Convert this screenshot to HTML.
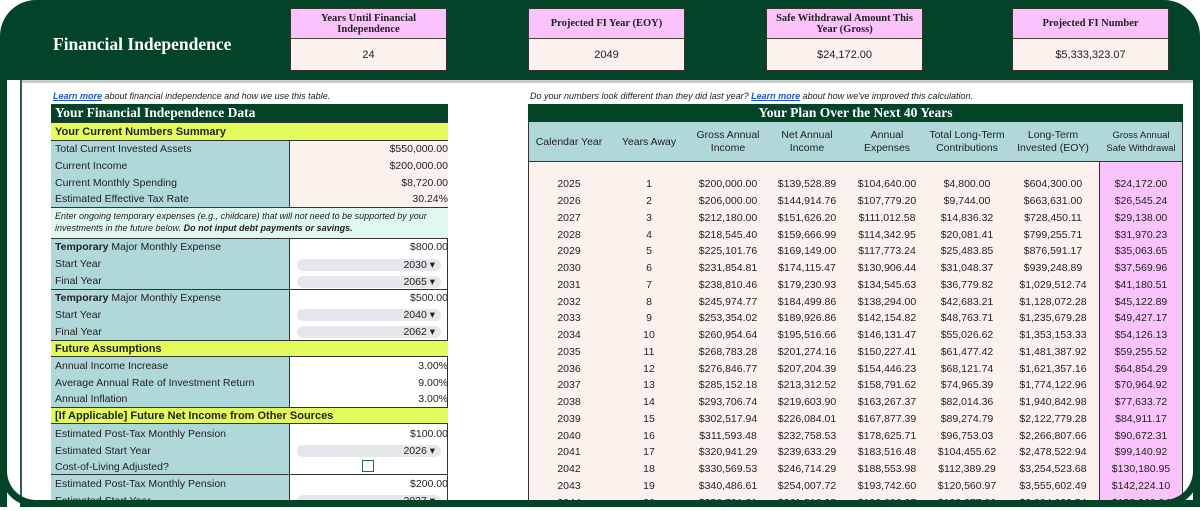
<!DOCTYPE html>
<html><head><meta charset="utf-8"><style>
*{margin:0;padding:0;box-sizing:border-box}
body{width:1200px;height:507px;overflow:hidden;background:#fff;font-family:"Liberation Sans",Arial,sans-serif;color:#222;position:relative}
.a{position:absolute}
.g{background:#034328}
.serif{font-family:"Liberation Serif",serif;font-weight:bold}
.box{position:absolute;top:8px;width:157px;height:63px;border:1px solid #333;background:#fdf1ee}
.box .h{height:30px;background:#fbc3fb;border-bottom:1px solid #444;font-family:"Liberation Serif",serif;font-weight:bold;font-size:10.5px;display:flex;align-items:center;justify-content:center;text-align:center;line-height:11px;color:#222}
.box .v{height:32px;display:flex;align-items:center;justify-content:center;font-size:11px}
.lab{position:absolute;left:51px;width:239px;background:#b1d8d8;border-right:1px solid #333}
.val{position:absolute;left:290px;width:158px}
.r{position:absolute;font-size:10.5px;line-height:17px;height:17px}
.rv{position:absolute;font-size:10.5px;line-height:17px;height:17px;right:752px;text-align:right}
.dd{position:absolute;left:297px;width:144px;height:12px;background:#e6e7ea;border-radius:6px;font-size:10.5px;line-height:12px;text-align:right;padding-right:6px}
.yel{position:absolute;left:51px;width:397px;height:17px;background:#e4fb5c;font-weight:bold;font-size:11px;line-height:17px;padding-left:4px;border-top:1px solid #333;border-bottom:1px solid #333}
.frame{border-left:1px solid #333;border-right:1px solid #333}
table{border-collapse:collapse;table-layout:fixed}
td{text-align:center;font-size:10.5px;height:16.75px;padding:0;white-space:nowrap}
</style></head><body>
<div class="a g" style="left:0;top:0;width:1200px;height:80px;border-radius:36px 36px 0 0"></div>
<div class="a" style="left:20px;top:80px;width:1173px;height:420px;background:#fff;border-top:3px solid #c8ccca"></div>
<div class="a g" style="left:0;top:40px;width:7px;height:467px"></div>
<div class="a g" style="left:1193px;top:40px;width:7px;height:467px"></div>
<div class="a" style="left:20px;top:80px;width:2px;height:420px;background:#2f5e45"></div>
<div class="a serif" style="left:53px;top:34px;color:#fff;font-size:17.5px">Financial Independence</div>
<div class="box" style="left:290px"><div class="h">Years Until Financial<br>Independence</div><div class="v">24</div></div>
<div class="box" style="left:528px"><div class="h">Projected FI Year (EOY)</div><div class="v">2049</div></div>
<div class="box" style="left:766px"><div class="h">Safe Withdrawal Amount This<br>Year (Gross)</div><div class="v">$24,172.00</div></div>
<div class="box" style="left:1012px"><div class="h">Projected FI Number</div><div class="v">$5,333,323.07</div></div>

<div class="a" style="left:53px;top:91px;font-size:9px;font-style:italic"><span style="color:#1a55d8;text-decoration:underline;font-weight:bold">Learn more</span> about financial independence and how we use this table.</div>
<div class="a g serif" style="left:51px;top:104px;width:397px;height:18px;color:#fff;font-size:13.5px;line-height:18px;padding-left:4px">Your Financial Independence Data</div>
<div class="yel" style="top:122px;height:19px;line-height:18px">Your Current Numbers Summary</div>
<div class="a frame" style="left:51px;top:140px;width:397px;height:367px"></div>
<div class="lab" style="top:141px;height:67px"></div><div class="val" style="top:141px;height:67px;background:#fdf1ee"></div>
<div class="r" style="left:55px;top:141px">Total Current Invested Assets</div><div class="rv" style="top:141px">$550,000.00</div>
<div class="r" style="left:55px;top:158px">Current Income</div><div class="rv" style="top:158px">$200,000.00</div>
<div class="r" style="left:55px;top:175px">Current Monthly Spending</div><div class="rv" style="top:175px">$8,720.00</div>
<div class="r" style="left:55px;top:191px">Estimated Effective Tax Rate</div><div class="rv" style="top:191px">30.24%</div>
<div class="a" style="left:51px;top:207px;width:397px;height:32px;background:#e0f6f1;border-top:1px solid #333;border-bottom:1px solid #333;font-size:9px;font-style:italic;line-height:11.5px;padding:3px 4px">Enter ongoing temporary expenses (e.g., childcare) that will not need to be supported by your investments in the future below. <b>Do not input debt payments or savings.</b></div>
<div class="lab" style="top:239px;height:101px"></div>
<div class="a" style="left:51px;top:289px;width:397px;height:1px;background:#333"></div>
<div class="r" style="left:55px;top:239px"><b>Temporary</b> Major Monthly Expense</div><div class="rv" style="top:239px">$800.00</div>
<div class="r" style="left:55px;top:256px">Start Year</div><div class="dd" style="top:259px">2030 &#9662;</div>
<div class="r" style="left:55px;top:273px">Final Year</div><div class="dd" style="top:276px">2065 &#9662;</div>
<div class="r" style="left:55px;top:290px"><b>Temporary</b> Major Monthly Expense</div><div class="rv" style="top:290px">$500.00</div>
<div class="r" style="left:55px;top:307px">Start Year</div><div class="dd" style="top:309px">2040 &#9662;</div>
<div class="r" style="left:55px;top:324px">Final Year</div><div class="dd" style="top:326px">2062 &#9662;</div>
<div class="yel" style="top:340px">Future Assumptions</div>
<div class="lab" style="top:357px;height:50px"></div>
<div class="r" style="left:55px;top:358px">Annual Income Increase</div><div class="rv" style="top:358px">3.00%</div>
<div class="r" style="left:55px;top:375px">Average Annual Rate of Investment Return</div><div class="rv" style="top:375px">9.00%</div>
<div class="r" style="left:55px;top:391px">Annual Inflation</div><div class="rv" style="top:391px">3.00%</div>
<div class="yel" style="top:407px">[If Applicable] Future Net Income from Other Sources</div>
<div class="lab" style="top:424px;height:83px"></div>
<div class="a" style="left:51px;top:474px;width:397px;height:1px;background:#333"></div>
<div class="r" style="left:55px;top:426px">Estimated Post-Tax Monthly Pension</div><div class="rv" style="top:426px">$100.00</div>
<div class="r" style="left:55px;top:443px">Estimated Start Year</div><div class="dd" style="top:445px">2026 &#9662;</div>
<div class="r" style="left:55px;top:459px">Cost-of-Living Adjusted?</div>
<div class="a" style="left:362px;top:460px;width:12px;height:12px;border:1.5px solid #2d6a4f"></div>
<div class="r" style="left:55px;top:476px">Estimated Post-Tax Monthly Pension</div><div class="rv" style="top:476px">$200.00</div>
<div class="r" style="left:55px;top:493px">Estimated Start Year</div><div class="dd" style="top:495px">2027 &#9662;</div>

<div class="a" style="left:530px;top:91px;font-size:9px;font-style:italic">Do your numbers look different than they did last year? <span style="color:#1a55d8;text-decoration:underline;font-weight:bold">Learn more</span> about how we've improved this calculation.</div>
<div class="a g serif" style="left:528px;top:104px;width:655px;height:18px;color:#fff;font-size:13.5px;line-height:18px;text-align:center">Your Plan Over the Next 40 Years</div>
<div class="a" style="left:528px;top:122px;width:655px;height:40px;background:#b1d8d8;border-left:1px solid #333;border-right:1px solid #333;border-bottom:1px solid #333"></div>
<div class="a" style="left:528px;top:162px;width:655px;height:345px;background:#fdf1ee;border-left:1px solid #333;border-right:1px solid #333"></div>
<div class="a" style="left:1099px;top:162px;width:84px;height:345px;background:#fbc3fb;border-left:1px solid #333;border-right:1px solid #333"></div>
<table class="a" style="left:529px;top:122px;width:654px">
<colgroup><col style="width:80px"><col style="width:80px"><col style="width:78px"><col style="width:80px"><col style="width:80px"><col style="width:80px"><col style="width:92px"><col style="width:84px"></colgroup>
<tr style="height:40px"><td>Calendar Year</td><td>Years Away</td><td style="line-height:13px">Gross Annual<br>Income</td><td style="line-height:13px">Net Annual<br>Income</td><td style="line-height:13px">Annual<br>Expenses</td><td style="line-height:13px">Total Long-Term<br>Contributions</td><td style="line-height:13px">Long-Term<br>Invested (EOY)</td><td style="line-height:13px;font-size:9.5px">Gross Annual<br>Safe Withdrawal</td></tr>
<tr style="height:14px"><td colspan="8" style="height:14px"></td></tr>
<tr><td>2025</td><td>1</td><td>$200,000.00</td><td>$139,528.89</td><td>$104,640.00</td><td>$4,800.00</td><td>$604,300.00</td><td>$24,172.00</td></tr>
<tr><td>2026</td><td>2</td><td>$206,000.00</td><td>$144,914.76</td><td>$107,779.20</td><td>$9,744.00</td><td>$663,631.00</td><td>$26,545.24</td></tr>
<tr><td>2027</td><td>3</td><td>$212,180.00</td><td>$151,626.20</td><td>$111,012.58</td><td>$14,836.32</td><td>$728,450.11</td><td>$29,138.00</td></tr>
<tr><td>2028</td><td>4</td><td>$218,545.40</td><td>$159,666.99</td><td>$114,342.95</td><td>$20,081.41</td><td>$799,255.71</td><td>$31,970.23</td></tr>
<tr><td>2029</td><td>5</td><td>$225,101.76</td><td>$169,149.00</td><td>$117,773.24</td><td>$25,483.85</td><td>$876,591.17</td><td>$35,063.65</td></tr>
<tr><td>2030</td><td>6</td><td>$231,854.81</td><td>$174,115.47</td><td>$130,906.44</td><td>$31,048.37</td><td>$939,248.89</td><td>$37,569.96</td></tr>
<tr><td>2031</td><td>7</td><td>$238,810.46</td><td>$179,230.93</td><td>$134,545.63</td><td>$36,779.82</td><td>$1,029,512.74</td><td>$41,180.51</td></tr>
<tr><td>2032</td><td>8</td><td>$245,974.77</td><td>$184,499.86</td><td>$138,294.00</td><td>$42,683.21</td><td>$1,128,072.28</td><td>$45,122.89</td></tr>
<tr><td>2033</td><td>9</td><td>$253,354.02</td><td>$189,926.86</td><td>$142,154.82</td><td>$48,763.71</td><td>$1,235,679.28</td><td>$49,427.17</td></tr>
<tr><td>2034</td><td>10</td><td>$260,954.64</td><td>$195,516.66</td><td>$146,131.47</td><td>$55,026.62</td><td>$1,353,153.33</td><td>$54,126.13</td></tr>
<tr><td>2035</td><td>11</td><td>$268,783.28</td><td>$201,274.16</td><td>$150,227.41</td><td>$61,477.42</td><td>$1,481,387.92</td><td>$59,255.52</td></tr>
<tr><td>2036</td><td>12</td><td>$276,846.77</td><td>$207,204.39</td><td>$154,446.23</td><td>$68,121.74</td><td>$1,621,357.16</td><td>$64,854.29</td></tr>
<tr><td>2037</td><td>13</td><td>$285,152.18</td><td>$213,312.52</td><td>$158,791.62</td><td>$74,965.39</td><td>$1,774,122.96</td><td>$70,964.92</td></tr>
<tr><td>2038</td><td>14</td><td>$293,706.74</td><td>$219,603.90</td><td>$163,267.37</td><td>$82,014.36</td><td>$1,940,842.98</td><td>$77,633.72</td></tr>
<tr><td>2039</td><td>15</td><td>$302,517.94</td><td>$226,084.01</td><td>$167,877.39</td><td>$89,274.79</td><td>$2,122,779.28</td><td>$84,911.17</td></tr>
<tr><td>2040</td><td>16</td><td>$311,593.48</td><td>$232,758.53</td><td>$178,625.71</td><td>$96,753.03</td><td>$2,266,807.66</td><td>$90,672.31</td></tr>
<tr><td>2041</td><td>17</td><td>$320,941.29</td><td>$239,633.29</td><td>$183,516.48</td><td>$104,455.62</td><td>$2,478,522.94</td><td>$99,140.92</td></tr>
<tr><td>2042</td><td>18</td><td>$330,569.53</td><td>$246,714.29</td><td>$188,553.98</td><td>$112,389.29</td><td>$3,254,523.68</td><td>$130,180.95</td></tr>
<tr><td>2043</td><td>19</td><td>$340,486.61</td><td>$254,007.72</td><td>$193,742.60</td><td>$120,560.97</td><td>$3,555,602.49</td><td>$142,224.10</td></tr>
<tr><td>2044</td><td>20</td><td>$350,701.21</td><td>$261,519.95</td><td>$199,086.87</td><td>$128,977.80</td><td>$3,884,023.54</td><td>$155,360.94</td></tr>
</table>
<div class="a" style="left:0;top:440px;width:1200px;height:67px;border:7px solid #034328;border-top:none;border-radius:0 0 36px 36px;pointer-events:none"></div>
<div class="a" style="left:20px;top:500px;width:1173px;height:7px;background:#034328"></div>
</body></html>
